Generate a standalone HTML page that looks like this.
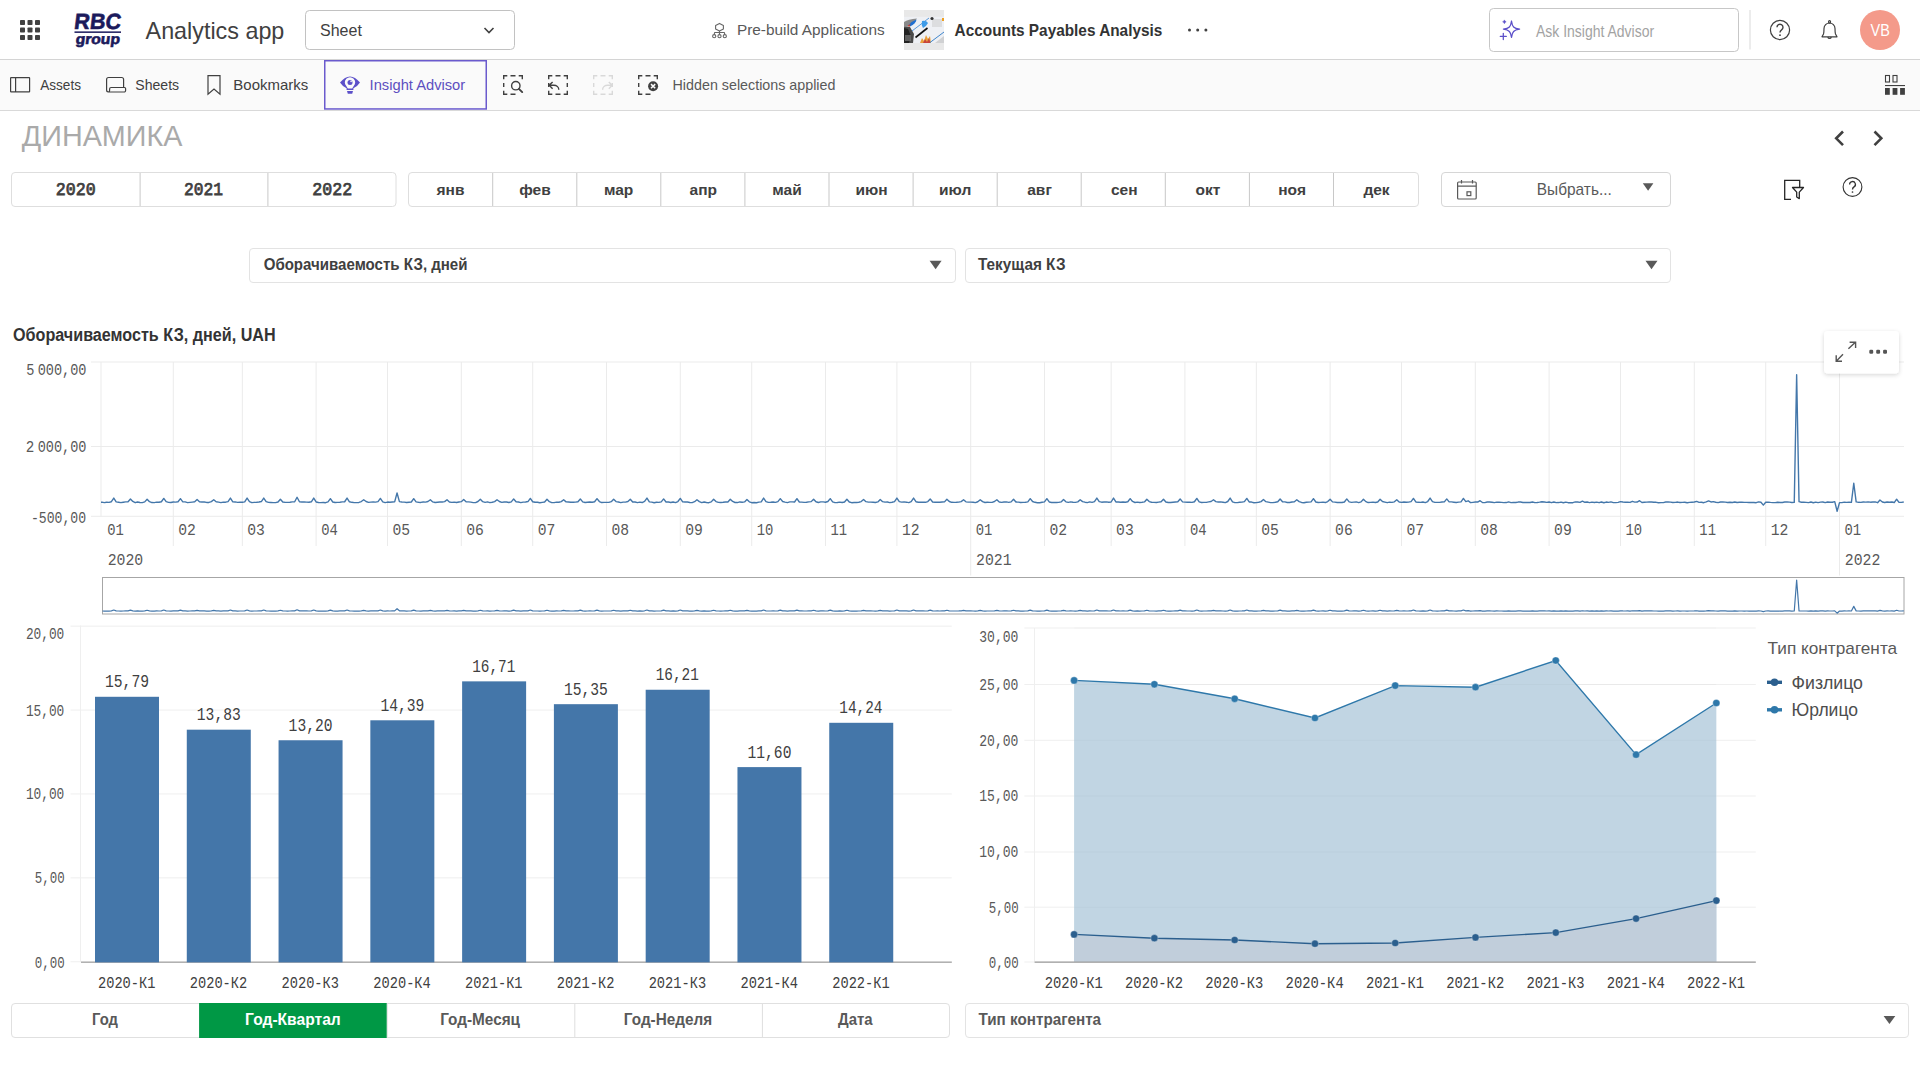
<!DOCTYPE html>
<html><head><meta charset='utf-8'><title>Analytics app</title>
<style>html,body{margin:0;padding:0;background:#fff;overflow:hidden;width:1920px;height:1080px}svg{display:block}text{font-kerning:normal}</style>
</head><body><svg width='1920' height='1080' viewBox='0 0 1920 1080'>
<rect x='0' y='0' width='1920' height='59' fill='#ffffff'/>
<rect x='0' y='59' width='1920' height='1' fill='#d4d4d4'/>
<rect x='0' y='60' width='1920' height='50' fill='#fafafa'/>
<rect x='0' y='110' width='1920' height='1' fill='#d9d9d9'/>
<rect x='20.0' y='20.0' width='5' height='5' rx='0.8' fill='#404040'/>
<rect x='20.0' y='27.5' width='5' height='5' rx='0.8' fill='#404040'/>
<rect x='20.0' y='35.0' width='5' height='5' rx='0.8' fill='#404040'/>
<rect x='27.5' y='20.0' width='5' height='5' rx='0.8' fill='#404040'/>
<rect x='27.5' y='27.5' width='5' height='5' rx='0.8' fill='#404040'/>
<rect x='27.5' y='35.0' width='5' height='5' rx='0.8' fill='#404040'/>
<rect x='35.0' y='20.0' width='5' height='5' rx='0.8' fill='#404040'/>
<rect x='35.0' y='27.5' width='5' height='5' rx='0.8' fill='#404040'/>
<rect x='35.0' y='35.0' width='5' height='5' rx='0.8' fill='#404040'/>
<text x='73.62' y='28.80' font-family='Liberation Sans' font-weight='700' font-size='22' fill='#1b1a5c' textLength='46.64' lengthAdjust='spacingAndGlyphs' transform='translate(0,28.8) skewX(-7) translate(0,-28.8)' stroke='#1b1a5c' stroke-width='0.6' xml:space='preserve'>RBC</text>
<rect x='74.5' y='31.4' width='46.5' height='1.5' fill='#1b1a5c'/>
<text x='75.20' y='43.60' font-family='Liberation Sans' font-weight='700' font-size='14.5' fill='#1b1a5c' textLength='44.28' lengthAdjust='spacingAndGlyphs' transform='translate(0,43.6) skewX(-7) translate(0,-43.6)' stroke='#1b1a5c' stroke-width='0.6' xml:space='preserve'>group</text>
<text x='145.60' y='39.00' font-family='Liberation Sans' font-weight='400' font-size='24' fill='#404040' textLength='138.73' lengthAdjust='spacingAndGlyphs' xml:space='preserve'>Analytics app</text>
<rect x='305.5' y='10.5' width='209' height='39' rx='4' fill='#fff' stroke='#c2c2c2' stroke-width='1'/>
<text x='320.06' y='36.10' font-family='Liberation Sans' font-weight='400' font-size='17' fill='#404040' textLength='41.81' lengthAdjust='spacingAndGlyphs' xml:space='preserve'>Sheet</text>
<polyline points='484.5,28 489,32.5 493.5,28' fill='none' stroke='#404040' stroke-width='1.6'/>
<g fill='none' stroke='#666' stroke-width='1.1' stroke-linejoin='round'><path d='M719.5,23.4 L723.4,25.4 V29 L719.5,31 L715.6,29 V25.4 z'/><path d='M719.5,31 V34.4 M714.2,34.6 L714.6,32.5 H724.4 L724.8,34.6'/><circle cx='714.2' cy='36.2' r='1.6'/><circle cx='719.5' cy='36.2' r='1.6'/><circle cx='724.8' cy='36.2' r='1.6'/></g>
<text x='736.94' y='35.00' font-family='Liberation Sans' font-weight='400' font-size='14.5' fill='#595959' textLength='147.74' lengthAdjust='spacingAndGlyphs' xml:space='preserve'>Pre-build Applications</text>
<rect x='904' y='10' width='40' height='40' fill='#e8e8e8'/>
<g><rect x='904' y='16.8' width='40' height='26.2' fill='#eef0f4'/><path d='M904,26 L910,27 L914,34 L913,43 H904 z' fill='#4a4a4a'/><path d='M904,28 L908,29 L911,36 L909,43 H904 z' fill='#222'/><path d='M905,35 h6 v6 h-6 z' fill='#777' fill-opacity='0.7'/><path d='M904,22 Q908,19 917,18.5 Q914,23 909,26 L904,27 z' fill='#8a8a8a'/><path d='M908,25.5 Q912,21 916.5,19.5 Q916,23.5 910,26.5 z' fill='#1f6fd0'/><path d='M907.5,26 Q909,24.5 910.5,24 L909.5,26.8 z' fill='#d8402a'/><path d='M912,31 L929,18' stroke='#4a8fd6' stroke-width='0.9' fill='none'/><path d='M922,21 Q926,20 928,23 Q926,27 923,28 Q921,25 922,21 z' fill='#3d9be8'/><path d='M915.5,37.5 L927.5,28' stroke='#111' stroke-width='1.6' fill='none'/><path d='M920,43 L922,38 L924,41 L926,35 L928,39 L930,36 L931,43 z' fill='#e9a03a'/><path d='M923,43 L925,39 L927,42 L929,38 L930.5,43 z' fill='#c8453a'/><path d='M930,42.5 L944,32' stroke='#3f86cc' stroke-width='1' fill='none'/><path d='M932,19 h10 v8 h-10 z' fill='#c9c9c9' fill-opacity='0.5'/><circle cx='932' cy='18.5' r='1.6' fill='#333'/><path d='M942,18 h2 v3 h-2 z' fill='#f0a020'/><path d='M935,43 L944,36 V43 z' fill='#bdbdbd' fill-opacity='0.6'/></g>
<text x='954.60' y='35.70' font-family='Liberation Sans' font-weight='700' font-size='17' fill='#333333' textLength='207.73' lengthAdjust='spacingAndGlyphs' xml:space='preserve'>Accounts Payables Analysis</text>
<circle cx='1189.5' cy='30' r='1.5' fill='#404040'/>
<circle cx='1197.7' cy='30' r='1.5' fill='#404040'/>
<circle cx='1205.9' cy='30' r='1.5' fill='#404040'/>
<rect x='1489.5' y='8.5' width='249' height='43' rx='4' fill='#fff' stroke='#c7c7c7' stroke-width='1'/>
<g fill='none' stroke='#5b4fc9' stroke-width='1.25' stroke-linejoin='round' stroke-linecap='round'><path d='M1511.5,21 C1512.3,26.8 1513.6,28.4 1519.6,29.2 C1513.6,30 1512.3,31.7 1511.5,37.4 C1510.7,31.7 1509.4,30 1503.4,29.2 C1509.4,28.4 1510.7,26.8 1511.5,21 z'/><path d='M1500.3,36.4 h6 M1503.3,33.3 v6.2'/></g><path d='M1504.4,19.9 Q1504.7,21.5 1506.2,21.8 Q1504.7,22.1 1504.4,23.7 Q1504.1,22.1 1502.6,21.8 Q1504.1,21.5 1504.4,19.9 z' fill='#5b4fc9' stroke='#5b4fc9' stroke-width='0.5'/>
<text x='1536.00' y='36.70' font-family='Liberation Sans' font-weight='400' font-size='16' fill='#a3a3a3' textLength='118.15' lengthAdjust='spacingAndGlyphs' xml:space='preserve'>Ask Insight Advisor</text>
<rect x='1749.5' y='10' width='1' height='39.5' fill='#d9d9d9'/>
<circle cx='1780' cy='30' r='9.6' fill='none' stroke='#404040' stroke-width='1.2'/>
<path d='M1777,27.3 a3,3 0 1 1 4.6,2.5 c-1.2,0.8 -1.6,1.2 -1.6,2.7' fill='none' stroke='#404040' stroke-width='1.4'/><circle cx='1780' cy='35.2' r='0.9' fill='#404040'/>
<g fill='none' stroke='#404040' stroke-width='1.2' stroke-linejoin='round'><path d='M1822,36.8 H1837 L1835.5,34 Q1835,32 1835,28.5 A5.5,5.5 0 0 0 1824,28.5 Q1824,32 1823.5,34 Z'/><path d='M1827.8,37 A1.8,1.8 0 0 0 1831.3,37'/><rect x='1828.6' y='20.6' width='1.9' height='2.6' rx='0.9'/></g>
<circle cx='1880' cy='30' r='20' fill='#f49a8a'/>
<text x='1870.50' y='35.50' font-family='Liberation Sans' font-weight='400' font-size='16' fill='#ffffff' textLength='19.31' lengthAdjust='spacingAndGlyphs' xml:space='preserve'>VB</text>
<g fill='none' stroke='#404040' stroke-width='1.2'><rect x='10.6' y='77.6' width='19' height='14.3' rx='0.5'/><path d='M15.6,77.6 v14.3'/><path d='M106.6,90 v-10.5 a2,2 0 0 1 2,-2 h13 a2,2 0 0 1 2,2 v7.5 M106.6,90 a2,2 0 0 0 2,2 h15.5 a1.5,1.5 0 0 0 1.5,-1.5 v-2 a1,1 0 0 0 -1,-1 h-13.5 a1.5,1.5 0 0 0 -1.5,1.5 v1.5 a1.5,1.5 0 0 1 -3,0'/><path d='M208,75.6 h12 v18.5 l-6,-5 l-6,5 z' stroke-linejoin='miter'/></g>
<text x='40.20' y='89.50' font-family='Liberation Sans' font-weight='400' font-size='14.5' fill='#404040' textLength='40.78' lengthAdjust='spacingAndGlyphs' xml:space='preserve'>Assets</text>
<text x='135.33' y='90.00' font-family='Liberation Sans' font-weight='400' font-size='14.5' fill='#404040' textLength='43.82' lengthAdjust='spacingAndGlyphs' xml:space='preserve'>Sheets</text>
<text x='233.37' y='90.00' font-family='Liberation Sans' font-weight='400' font-size='14.5' fill='#404040' textLength='74.88' lengthAdjust='spacingAndGlyphs' xml:space='preserve'>Bookmarks</text>
<rect x='324.75' y='60.75' width='161.5' height='48.2' fill='#fafafa' stroke='#6a5acd' stroke-width='1.5'/>
<path d='M340,82.5 Q350,70.5 360,82.5 Q357,87 353.4,88.3 V89.9 H346.6 V88.3 Q343,87 340,82.5 z' fill='#5b4fc9'/><path d='M346.3,86 A5.2,5.2 0 1 1 353.7,86 L352.2,88.5 H347.8 z' fill='#fafafa'/><circle cx='350' cy='82.4' r='2.5' fill='#5b4fc9'/><circle cx='351.1' cy='81.4' r='0.8' fill='#fafafa'/><path d='M347,91 H353 L352.2,93.8 H347.8 z' fill='#5b4fc9'/>
<text x='369.59' y='89.75' font-family='Liberation Sans' font-weight='400' font-size='14.5' fill='#5d4fc0' textLength='95.62' lengthAdjust='spacingAndGlyphs' xml:space='preserve'>Insight Advisor</text>
<path d='M503.7,79.3 V75.7 H507.3 M518.6999999999999,75.7 H522.3 V79.3 M503.7,90.7 V94.3 H507.3 M510.5,75.7 H515.5 M510.5,94.3 H515.5 M503.7,83 V87' fill='none' stroke='#404040' stroke-width='1.4'/>
<circle cx='515.8' cy='85.7' r='4.2' fill='none' stroke='#404040' stroke-width='1.4'/><path d='M518.9,88.8 l3.3,3.3' stroke='#404040' stroke-width='1.9' stroke-linecap='round'/>
<path d='M548.7,79.3 V75.7 H552.3000000000001 M563.6999999999999,75.7 H567.3 V79.3 M548.7,90.7 V94.3 H552.3000000000001 M563.6999999999999,94.3 H567.3 V90.7 M555.5,75.7 H560.5 M555.5,94.3 H560.5 M548.7,83 V87 M567.3,83 V87' fill='none' stroke='#404040' stroke-width='1.4'/>
<path d='M549.2,85.3 H553.8 A5,4.4 0 0 1 558.8,89.7 M552.6,81.9 L549.2,85.3 L552.6,88.7' fill='none' stroke='#404040' stroke-width='1.4' stroke-linejoin='round'/>
<path d='M593.7,79.3 V75.7 H597.3000000000001 M608.6999999999999,75.7 H612.3 V79.3 M593.7,90.7 V94.3 H597.3000000000001 M608.6999999999999,94.3 H612.3 V90.7 M600.5,75.7 H605.5 M600.5,94.3 H605.5 M593.7,83 V87 M612.3,83 V87' fill='none' stroke='#d9d9d9' stroke-width='1.4'/>
<path d='M612.2,85.3 H607.6 A5,4.4 0 0 0 602.6,89.7 M608.8,81.9 L612.2,85.3 L608.8,88.7' fill='none' stroke='#d9d9d9' stroke-width='1.4' stroke-linejoin='round'/>
<path d='M638.7,79.3 V75.7 H642.3000000000001 M653.6999999999999,75.7 H657.3 V79.3 M638.7,90.7 V94.3 H642.3000000000001 M645.5,75.7 H650.5 M645.5,94.3 H650.5 M638.7,83 V87' fill='none' stroke='#404040' stroke-width='1.4'/>
<circle cx='653.1' cy='86.2' r='5' fill='#404040'/><path d='M651,84.1 l4.2,4.2 M655.2,84.1 l-4.2,4.2' stroke='#fafafa' stroke-width='1.5'/>
<text x='672.55' y='89.70' font-family='Liberation Sans' font-weight='400' font-size='15' fill='#595959' textLength='162.86' lengthAdjust='spacingAndGlyphs' xml:space='preserve'>Hidden selections applied</text>
<g fill='#404040'><rect x='1885.5' y='75.5' width='4' height='6.5' fill='none' stroke='#404040' stroke-width='1.1'/><rect x='1893' y='75.5' width='4' height='6.5' fill='none' stroke='#404040' stroke-width='1.1'/><rect x='1885' y='85' width='20' height='1.1'/><rect x='1885' y='88' width='4.8' height='6.8'/><rect x='1892.6' y='88' width='4.8' height='6.8'/><rect x='1900.1' y='88' width='4.8' height='6.8'/></g>
<text x='21.80' y='146.10' font-family='Liberation Sans' font-weight='400' font-size='30' fill='#aaaaaa' textLength='160.61' lengthAdjust='spacingAndGlyphs' xml:space='preserve'>ДИНАМИКА</text>
<path d='M1843,131.5 l-6.8,6.8 l6.8,6.8 M1874.5,131.5 l6.8,6.8 l-6.8,6.8' fill='none' stroke='#404040' stroke-width='2.6'/>
<rect x='11.5' y='172.5' width='384.5' height='34' rx='3.5' fill='#fff' stroke='#dedede' stroke-width='1'/>
<rect x='139.6' y='173' width='1' height='33' fill='#c8c8c8'/>
<rect x='267.4' y='173' width='1' height='33' fill='#c8c8c8'/>
<text x='55.85' y='195.00' font-family='Liberation Mono' font-weight='400' font-size='17.5' fill='#404040' textLength='39.91' lengthAdjust='spacingAndGlyphs' stroke='#404040' stroke-width='0.75' xml:space='preserve'>2020</text>
<text x='184.07' y='195.00' font-family='Liberation Mono' font-weight='400' font-size='17.5' fill='#404040' textLength='38.94' lengthAdjust='spacingAndGlyphs' stroke='#404040' stroke-width='0.75' xml:space='preserve'>2021</text>
<text x='312.25' y='195.00' font-family='Liberation Mono' font-weight='400' font-size='17.5' fill='#404040' textLength='39.91' lengthAdjust='spacingAndGlyphs' stroke='#404040' stroke-width='0.75' xml:space='preserve'>2022</text>
<rect x='408.5' y='172.5' width='1010' height='34' rx='3.5' fill='#fff' stroke='#dedede' stroke-width='1'/>
<rect x='492.2' y='173' width='1' height='33' fill='#c8c8c8'/>
<rect x='576.3' y='173' width='1' height='33' fill='#c8c8c8'/>
<rect x='660.3' y='173' width='1' height='33' fill='#c8c8c8'/>
<rect x='744.4' y='173' width='1' height='33' fill='#c8c8c8'/>
<rect x='828.5' y='173' width='1' height='33' fill='#c8c8c8'/>
<rect x='912.6' y='173' width='1' height='33' fill='#c8c8c8'/>
<rect x='996.7' y='173' width='1' height='33' fill='#c8c8c8'/>
<rect x='1080.7' y='173' width='1' height='33' fill='#c8c8c8'/>
<rect x='1164.8' y='173' width='1' height='33' fill='#c8c8c8'/>
<rect x='1248.9' y='173' width='1' height='33' fill='#c8c8c8'/>
<rect x='1333.0' y='173' width='1' height='33' fill='#c8c8c8'/>
<text x='436.58' y='195.00' font-family='Liberation Sans' font-weight='700' font-size='15.5' fill='#404040' xml:space='preserve'>янв</text>
<text x='519.25' y='195.00' font-family='Liberation Sans' font-weight='700' font-size='15.5' fill='#404040' xml:space='preserve'>фев</text>
<text x='603.92' y='195.00' font-family='Liberation Sans' font-weight='700' font-size='15.5' fill='#404040' xml:space='preserve'>мар</text>
<text x='689.58' y='195.00' font-family='Liberation Sans' font-weight='700' font-size='15.5' fill='#404040' xml:space='preserve'>апр</text>
<text x='772.25' y='195.00' font-family='Liberation Sans' font-weight='700' font-size='15.5' fill='#404040' xml:space='preserve'>май</text>
<text x='855.42' y='195.00' font-family='Liberation Sans' font-weight='700' font-size='15.5' fill='#404040' xml:space='preserve'>июн</text>
<text x='939.08' y='195.00' font-family='Liberation Sans' font-weight='700' font-size='15.5' fill='#404040' xml:space='preserve'>июл</text>
<text x='1027.25' y='195.00' font-family='Liberation Sans' font-weight='700' font-size='15.5' fill='#404040' xml:space='preserve'>авг</text>
<text x='1110.92' y='195.00' font-family='Liberation Sans' font-weight='700' font-size='15.5' fill='#404040' xml:space='preserve'>сен</text>
<text x='1195.58' y='195.00' font-family='Liberation Sans' font-weight='700' font-size='15.5' fill='#404040' xml:space='preserve'>окт</text>
<text x='1278.25' y='195.00' font-family='Liberation Sans' font-weight='700' font-size='15.5' fill='#404040' xml:space='preserve'>ноя</text>
<text x='1363.42' y='195.00' font-family='Liberation Sans' font-weight='700' font-size='15.5' fill='#404040' xml:space='preserve'>дек</text>
<rect x='1441.5' y='172.5' width='229' height='34' rx='3.5' fill='#fff' stroke='#d6d6d6' stroke-width='1'/>
<g fill='none' stroke='#595959' stroke-width='1.2'><rect x='1457.6' y='182' width='18.6' height='17' rx='1'/><path d='M1457.6,186.2 h18.6 M1461.5,180 v3.5 M1472.5,180 v3.5'/><rect x='1467' y='191.8' width='3.8' height='3.8'/></g>
<text x='1536.79' y='195.20' font-family='Liberation Sans' font-weight='400' font-size='17' fill='#595959' textLength='75.10' lengthAdjust='spacingAndGlyphs' xml:space='preserve'>Выбрать...</text>
<path d='M1642.8,183.3 h10.6 l-5.3,7.5 z' fill='#595959'/>
<g fill='none' stroke='#262626' stroke-width='1.3'><path d='M1791,199.3 h-6.3 v-19 h15 v7'/><path d='M1792.5,187.5 h11 l-4.2,4.6 v6.5 l-2.6,-1.6 v-4.9 z' stroke-linejoin='round'/></g>
<circle cx='1852.5' cy='187' r='9.4' fill='none' stroke='#333' stroke-width='1.1'/>
<path d='M1849.6,184.5 a2.9,2.9 0 1 1 4.4,2.4 c-1.1,0.7 -1.5,1.1 -1.5,2.6' fill='none' stroke='#333' stroke-width='1.3'/><circle cx='1852.5' cy='192' r='0.85' fill='#333'/>
<rect x='249.5' y='248.5' width='706' height='34' rx='3.5' fill='#fff' stroke='#e3e3e3' stroke-width='1'/>
<text x='263.70' y='269.50' font-family='Liberation Sans' font-weight='700' font-size='16' fill='#404040' textLength='203.81' lengthAdjust='spacingAndGlyphs' xml:space='preserve'>Оборачиваемость КЗ, дней</text>
<path d='M929.6,260.8 h12 l-6,8.4 z' fill='#595959'/>
<rect x='965.5' y='248.5' width='705' height='34' rx='3.5' fill='#fff' stroke='#e3e3e3' stroke-width='1'/>
<text x='978.00' y='269.50' font-family='Liberation Sans' font-weight='700' font-size='16' fill='#404040' textLength='87.62' lengthAdjust='spacingAndGlyphs' xml:space='preserve'>Текущая КЗ</text>
<path d='M1645.5,260.8 h12 l-6,8.4 z' fill='#595959'/>
<text x='13.00' y='340.90' font-family='Liberation Sans' font-weight='700' font-size='17.5' fill='#333333' textLength='262.65' lengthAdjust='spacingAndGlyphs' xml:space='preserve'>Оборачиваемость КЗ, дней, UAH</text>
<rect x='91' y='361.5' width='1813' height='1' fill='#ebebeb'/>
<rect x='91' y='446.0' width='1813' height='1' fill='#ebebeb'/>
<rect x='91' y='515.8' width='1813' height='1' fill='#ebebeb'/>
<rect x='100.50' y='362' width='1' height='154.3' fill='#ebebeb'/>
<text x='107.23' y='534.80' font-family='Liberation Mono' font-weight='400' font-size='16' fill='#595959' textLength='16.64' lengthAdjust='spacingAndGlyphs' xml:space='preserve'>01</text>
<text x='107.68' y='565.00' font-family='Liberation Mono' font-weight='400' font-size='16' fill='#595959' textLength='35.50' lengthAdjust='spacingAndGlyphs' xml:space='preserve'>2020</text>
<rect x='172.79' y='362' width='1' height='184.0' fill='#ebebeb'/>
<text x='178.27' y='534.80' font-family='Liberation Mono' font-weight='400' font-size='16' fill='#595959' textLength='17.62' lengthAdjust='spacingAndGlyphs' xml:space='preserve'>02</text>
<rect x='241.82' y='362' width='1' height='184.0' fill='#ebebeb'/>
<text x='247.30' y='534.80' font-family='Liberation Mono' font-weight='400' font-size='16' fill='#595959' textLength='17.62' lengthAdjust='spacingAndGlyphs' xml:space='preserve'>03</text>
<rect x='315.61' y='362' width='1' height='184.0' fill='#ebebeb'/>
<text x='321.14' y='534.80' font-family='Liberation Mono' font-weight='400' font-size='16' fill='#595959' textLength='16.64' lengthAdjust='spacingAndGlyphs' xml:space='preserve'>04</text>
<rect x='387.02' y='362' width='1' height='184.0' fill='#ebebeb'/>
<text x='392.50' y='534.80' font-family='Liberation Mono' font-weight='400' font-size='16' fill='#595959' textLength='17.62' lengthAdjust='spacingAndGlyphs' xml:space='preserve'>05</text>
<rect x='460.81' y='362' width='1' height='184.0' fill='#ebebeb'/>
<text x='466.29' y='534.80' font-family='Liberation Mono' font-weight='400' font-size='16' fill='#595959' textLength='17.62' lengthAdjust='spacingAndGlyphs' xml:space='preserve'>06</text>
<rect x='532.21' y='362' width='1' height='184.0' fill='#ebebeb'/>
<text x='537.70' y='534.80' font-family='Liberation Mono' font-weight='400' font-size='16' fill='#595959' textLength='17.62' lengthAdjust='spacingAndGlyphs' xml:space='preserve'>07</text>
<rect x='606.00' y='362' width='1' height='184.0' fill='#ebebeb'/>
<text x='611.49' y='534.80' font-family='Liberation Mono' font-weight='400' font-size='16' fill='#595959' textLength='17.62' lengthAdjust='spacingAndGlyphs' xml:space='preserve'>08</text>
<rect x='679.79' y='362' width='1' height='184.0' fill='#ebebeb'/>
<text x='685.28' y='534.80' font-family='Liberation Mono' font-weight='400' font-size='16' fill='#595959' textLength='17.62' lengthAdjust='spacingAndGlyphs' xml:space='preserve'>09</text>
<rect x='751.20' y='362' width='1' height='184.0' fill='#ebebeb'/>
<text x='756.74' y='534.80' font-family='Liberation Mono' font-weight='400' font-size='16' fill='#595959' textLength='16.64' lengthAdjust='spacingAndGlyphs' xml:space='preserve'>10</text>
<rect x='824.99' y='362' width='1' height='184.0' fill='#ebebeb'/>
<text x='830.52' y='534.80' font-family='Liberation Mono' font-weight='400' font-size='16' fill='#595959' textLength='16.64' lengthAdjust='spacingAndGlyphs' xml:space='preserve'>11</text>
<rect x='896.40' y='362' width='1' height='184.0' fill='#ebebeb'/>
<text x='901.88' y='534.80' font-family='Liberation Mono' font-weight='400' font-size='16' fill='#595959' textLength='17.62' lengthAdjust='spacingAndGlyphs' xml:space='preserve'>12</text>
<rect x='970.19' y='362' width='1' height='213.5' fill='#ebebeb'/>
<text x='975.72' y='534.80' font-family='Liberation Mono' font-weight='400' font-size='16' fill='#595959' textLength='16.64' lengthAdjust='spacingAndGlyphs' xml:space='preserve'>01</text>
<text x='976.07' y='565.00' font-family='Liberation Mono' font-weight='400' font-size='16' fill='#595959' textLength='35.50' lengthAdjust='spacingAndGlyphs' xml:space='preserve'>2021</text>
<rect x='1043.98' y='362' width='1' height='184.0' fill='#ebebeb'/>
<text x='1049.46' y='534.80' font-family='Liberation Mono' font-weight='400' font-size='16' fill='#595959' textLength='17.62' lengthAdjust='spacingAndGlyphs' xml:space='preserve'>02</text>
<rect x='1110.63' y='362' width='1' height='184.0' fill='#ebebeb'/>
<text x='1116.11' y='534.80' font-family='Liberation Mono' font-weight='400' font-size='16' fill='#595959' textLength='17.62' lengthAdjust='spacingAndGlyphs' xml:space='preserve'>03</text>
<rect x='1184.42' y='362' width='1' height='184.0' fill='#ebebeb'/>
<text x='1189.95' y='534.80' font-family='Liberation Mono' font-weight='400' font-size='16' fill='#595959' textLength='16.64' lengthAdjust='spacingAndGlyphs' xml:space='preserve'>04</text>
<rect x='1255.83' y='362' width='1' height='184.0' fill='#ebebeb'/>
<text x='1261.31' y='534.80' font-family='Liberation Mono' font-weight='400' font-size='16' fill='#595959' textLength='17.62' lengthAdjust='spacingAndGlyphs' xml:space='preserve'>05</text>
<rect x='1329.62' y='362' width='1' height='184.0' fill='#ebebeb'/>
<text x='1335.10' y='534.80' font-family='Liberation Mono' font-weight='400' font-size='16' fill='#595959' textLength='17.62' lengthAdjust='spacingAndGlyphs' xml:space='preserve'>06</text>
<rect x='1401.02' y='362' width='1' height='184.0' fill='#ebebeb'/>
<text x='1406.51' y='534.80' font-family='Liberation Mono' font-weight='400' font-size='16' fill='#595959' textLength='17.62' lengthAdjust='spacingAndGlyphs' xml:space='preserve'>07</text>
<rect x='1474.81' y='362' width='1' height='184.0' fill='#ebebeb'/>
<text x='1480.30' y='534.80' font-family='Liberation Mono' font-weight='400' font-size='16' fill='#595959' textLength='17.62' lengthAdjust='spacingAndGlyphs' xml:space='preserve'>08</text>
<rect x='1548.60' y='362' width='1' height='184.0' fill='#ebebeb'/>
<text x='1554.09' y='534.80' font-family='Liberation Mono' font-weight='400' font-size='16' fill='#595959' textLength='17.62' lengthAdjust='spacingAndGlyphs' xml:space='preserve'>09</text>
<rect x='1620.01' y='362' width='1' height='184.0' fill='#ebebeb'/>
<text x='1625.55' y='534.80' font-family='Liberation Mono' font-weight='400' font-size='16' fill='#595959' textLength='16.64' lengthAdjust='spacingAndGlyphs' xml:space='preserve'>10</text>
<rect x='1693.80' y='362' width='1' height='184.0' fill='#ebebeb'/>
<text x='1699.33' y='534.80' font-family='Liberation Mono' font-weight='400' font-size='16' fill='#595959' textLength='16.64' lengthAdjust='spacingAndGlyphs' xml:space='preserve'>11</text>
<rect x='1765.21' y='362' width='1' height='184.0' fill='#ebebeb'/>
<text x='1770.69' y='534.80' font-family='Liberation Mono' font-weight='400' font-size='16' fill='#595959' textLength='17.62' lengthAdjust='spacingAndGlyphs' xml:space='preserve'>12</text>
<rect x='1839.00' y='362' width='1' height='213.5' fill='#ebebeb'/>
<text x='1844.53' y='534.80' font-family='Liberation Mono' font-weight='400' font-size='16' fill='#595959' textLength='16.64' lengthAdjust='spacingAndGlyphs' xml:space='preserve'>01</text>
<text x='1844.87' y='565.00' font-family='Liberation Mono' font-weight='400' font-size='16' fill='#595959' textLength='35.50' lengthAdjust='spacingAndGlyphs' xml:space='preserve'>2022</text>
<text x='26.15' y='375.00' font-family='Liberation Mono' font-weight='400' font-size='16' fill='#595959' textLength='8.17' lengthAdjust='spacingAndGlyphs' xml:space='preserve'>5</text>
<text x='37.65' y='375.00' font-family='Liberation Mono' font-weight='400' font-size='16' fill='#595959' textLength='48.76' lengthAdjust='spacingAndGlyphs' xml:space='preserve'>000,00</text>
<text x='25.81' y='452.00' font-family='Liberation Mono' font-weight='400' font-size='16' fill='#595959' textLength='8.53' lengthAdjust='spacingAndGlyphs' xml:space='preserve'>2</text>
<text x='37.65' y='452.00' font-family='Liberation Mono' font-weight='400' font-size='16' fill='#595959' textLength='48.76' lengthAdjust='spacingAndGlyphs' xml:space='preserve'>000,00</text>
<text x='30.96' y='523.00' font-family='Liberation Mono' font-weight='400' font-size='16' fill='#595959' textLength='55.12' lengthAdjust='spacingAndGlyphs' xml:space='preserve'>-500,00</text>
<polyline points='101,502.22 101.88,502.17 104.26,502.66 106.64,502.27 109.02,502.41 111.40,501.73 113.78,498.09 116.16,501.88 118.54,502.26 120.92,502.67 123.30,502.24 125.68,501.92 128.06,501.69 130.44,498.93 132.82,501.47 135.20,502.68 137.58,502.00 139.97,502.48 142.35,502.60 144.73,501.85 147.11,499.21 149.49,501.70 151.87,502.56 154.25,502.64 156.63,502.12 159.01,502.25 161.39,501.74 163.77,498.37 166.15,501.69 168.53,502.34 170.91,502.47 173.29,502.05 175.67,502.13 178.05,501.70 180.43,498.65 182.81,501.86 185.19,501.90 187.57,502.62 189.95,502.37 192.33,502.08 194.71,501.75 197.09,499.50 199.47,501.71 201.85,502.06 204.23,502.03 206.61,502.43 208.99,502.43 211.37,501.57 213.75,499.78 216.13,501.75 218.51,502.16 220.90,502.67 223.28,502.13 225.66,502.18 228.04,501.56 230.42,498.09 232.80,501.82 235.18,501.93 237.56,502.42 239.94,502.21 242.32,502.31 244.70,501.86 247.08,498.09 249.46,501.53 251.84,502.65 254.22,502.34 256.60,502.26 258.98,501.98 261.36,501.53 263.74,498.09 266.12,501.64 268.50,502.40 270.88,502.53 273.26,502.65 275.64,502.59 278.02,502.01 280.40,499.21 282.78,502.02 285.16,502.37 287.54,502.41 289.92,502.24 292.30,501.92 294.68,501.73 297.06,497.25 299.45,501.76 301.83,501.99 304.21,501.92 306.59,502.15 308.97,502.25 311.35,501.80 313.73,498.09 316.11,501.98 318.49,502.55 320.87,502.58 323.25,502.43 325.63,502.68 328.01,501.93 330.39,498.65 332.77,501.98 335.15,502.55 337.53,502.40 339.91,502.19 342.29,501.92 344.67,501.75 347.05,498.09 349.43,501.76 351.81,502.31 354.19,502.65 356.57,502.63 358.95,502.43 361.33,501.55 363.71,499.78 366.09,501.49 368.47,502.42 370.85,502.14 373.23,501.95 375.61,502.08 378.00,501.66 380.38,498.37 382.76,501.81 385.14,502.58 387.52,502.07 389.90,502.27 392.28,502.07 394.66,501.89 397.04,493.04 399.42,501.57 401.80,502.03 404.18,502.10 406.56,502.53 408.94,502.29 411.32,502.00 413.70,498.65 416.08,501.91 418.46,502.21 420.84,502.43 423.22,502.04 425.60,502.11 427.98,501.47 430.36,499.78 432.74,501.91 435.12,502.55 437.50,502.20 439.88,501.96 442.26,502.01 444.64,501.65 447.02,499.78 449.40,501.95 451.78,502.39 454.16,502.12 456.55,502.55 458.93,501.97 461.31,501.66 463.69,499.50 466.07,501.79 468.45,501.92 470.83,502.11 473.21,502.58 475.59,502.61 477.97,501.51 480.35,499.21 482.73,501.69 485.11,502.32 487.49,501.93 489.87,502.59 492.25,502.26 494.63,501.57 497.01,499.78 499.39,501.50 501.77,502.36 504.15,501.99 506.53,502.03 508.91,502.54 511.29,501.86 513.67,498.93 516.05,501.71 518.43,502.02 520.81,502.67 523.19,502.10 525.57,501.97 527.95,501.56 530.33,498.37 532.71,501.74 535.09,502.27 537.48,502.28 539.86,502.71 542.24,502.35 544.62,502.02 547.00,499.21 549.38,501.67 551.76,502.62 554.14,502.67 556.52,502.15 558.90,502.27 561.28,501.58 563.66,499.78 566.04,501.86 568.42,502.07 570.80,502.29 573.18,502.25 575.56,502.08 577.94,501.77 580.32,498.93 582.70,501.91 585.08,502.49 587.46,502.29 589.84,502.04 592.22,502.29 594.60,501.73 596.98,498.65 599.36,501.52 601.74,502.55 604.12,502.34 606.50,502.37 608.88,502.39 611.26,501.64 613.64,499.21 616.03,501.58 618.41,501.97 620.79,502.59 623.17,502.12 625.55,502.17 627.93,501.52 630.31,499.21 632.69,501.97 635.07,501.98 637.45,502.58 639.83,502.16 642.21,502.53 644.59,501.46 646.97,498.09 649.35,501.84 651.73,502.11 654.11,502.70 656.49,502.25 658.87,502.35 661.25,501.83 663.63,498.93 666.01,501.96 668.39,501.95 670.77,502.53 673.15,501.98 675.53,502.65 677.91,501.51 680.29,498.37 682.67,501.78 685.05,501.95 687.43,502.03 689.81,502.50 692.19,502.60 694.58,501.70 696.96,499.78 699.34,501.57 701.72,502.57 704.10,501.97 706.48,502.49 708.86,502.71 711.24,501.87 713.62,499.21 716.00,501.54 718.38,502.34 720.76,502.44 723.14,502.26 725.52,501.94 727.90,501.95 730.28,499.21 732.66,501.48 735.04,502.50 737.42,502.57 739.80,501.94 742.18,502.19 744.56,501.90 746.94,499.50 749.32,501.82 751.70,502.71 754.08,502.51 756.46,502.71 758.84,502.10 761.22,501.91 763.60,498.09 765.98,501.56 768.36,502.36 770.74,502.30 773.12,502.02 775.51,502.39 777.89,501.63 780.27,498.65 782.65,501.52 785.03,502.11 787.41,502.60 789.79,501.89 792.17,501.89 794.55,502.01 796.93,498.65 799.31,501.99 801.69,502.16 804.07,502.40 806.45,502.29 808.83,501.90 811.21,501.63 813.59,499.21 815.97,501.77 818.35,502.50 820.73,501.91 823.11,501.90 825.49,502.26 827.87,501.48 830.25,498.65 832.63,501.83 835.01,502.65 837.39,502.49 839.77,502.17 842.15,502.51 844.53,501.97 846.91,499.21 849.29,502.00 851.67,502.70 854.06,502.46 856.44,502.52 858.82,502.23 861.20,501.60 863.58,499.50 865.96,501.68 868.34,502.08 870.72,502.11 873.10,502.30 875.48,502.48 877.86,501.94 880.24,499.50 882.62,501.67 885.00,502.10 887.38,502.04 889.76,502.60 892.14,502.28 894.52,501.55 896.90,498.09 899.28,501.57 901.66,502.12 904.04,501.92 906.42,502.18 908.80,502.65 911.18,501.66 913.56,498.09 915.94,501.71 918.32,502.19 920.70,502.19 923.08,502.15 925.46,502.31 927.84,501.57 930.22,498.93 932.61,501.97 934.99,502.28 937.37,502.09 939.75,502.32 942.13,502.04 944.51,501.89 946.89,499.21 949.27,501.47 951.65,502.31 954.03,502.40 956.41,502.32 958.79,502.15 961.17,501.67 963.55,499.78 965.93,501.83 968.31,502.17 970.69,502.14 973.07,502.20 975.45,502.61 977.83,501.75 980.21,499.78 982.59,501.64 984.97,502.48 987.35,502.29 989.73,502.33 992.11,502.33 994.49,501.52 996.87,499.78 999.25,502.01 1001.63,502.33 1004.01,502.03 1006.39,501.91 1008.77,502.34 1011.15,501.90 1013.54,499.21 1015.92,501.97 1018.30,502.09 1020.68,502.50 1023.06,502.42 1025.44,502.21 1027.82,501.86 1030.20,498.65 1032.58,501.52 1034.96,502.31 1037.34,502.70 1039.72,502.72 1042.10,502.31 1044.48,501.85 1046.86,498.65 1049.24,501.95 1051.62,502.44 1054.00,502.45 1056.38,502.44 1058.76,502.39 1061.14,501.91 1063.52,499.50 1065.90,501.81 1068.28,502.39 1070.66,501.88 1073.04,502.22 1075.42,502.42 1077.80,501.87 1080.18,499.78 1082.56,501.65 1084.94,502.19 1087.32,502.60 1089.70,501.90 1092.09,502.35 1094.47,501.59 1096.85,498.09 1099.23,501.56 1101.61,502.19 1103.99,501.95 1106.37,501.93 1108.75,502.26 1111.13,501.99 1113.51,498.09 1115.89,501.94 1118.27,501.99 1120.65,502.31 1123.03,501.95 1125.41,502.26 1127.79,501.79 1130.17,498.65 1132.55,501.47 1134.93,502.50 1137.31,502.17 1139.69,502.47 1142.07,502.25 1144.45,501.93 1146.83,499.21 1149.21,501.56 1151.59,502.26 1153.97,502.34 1156.35,502.44 1158.73,502.08 1161.11,501.71 1163.49,499.21 1165.87,501.97 1168.25,502.52 1170.63,502.50 1173.02,502.24 1175.40,501.97 1177.78,501.79 1180.16,498.93 1182.54,501.87 1184.92,502.09 1187.30,502.30 1189.68,502.24 1192.06,502.42 1194.44,501.72 1196.82,498.37 1199.20,501.87 1201.58,502.51 1203.96,502.38 1206.34,502.35 1208.72,501.92 1211.10,501.53 1213.48,499.78 1215.86,501.59 1218.24,502.04 1220.62,501.91 1223.00,502.31 1225.38,502.66 1227.76,501.50 1230.14,498.09 1232.52,501.88 1234.90,502.63 1237.28,502.59 1239.66,502.28 1242.04,502.15 1244.42,501.61 1246.80,498.37 1249.18,501.97 1251.57,502.07 1253.95,502.72 1256.33,502.62 1258.71,502.24 1261.09,501.62 1263.47,499.50 1265.85,501.66 1268.23,502.13 1270.61,502.63 1272.99,502.66 1275.37,502.28 1277.75,501.80 1280.13,498.93 1282.51,501.72 1284.89,501.88 1287.27,502.49 1289.65,502.45 1292.03,502.01 1294.41,501.72 1296.79,499.78 1299.17,501.62 1301.55,502.46 1303.93,502.70 1306.31,502.30 1308.69,502.15 1311.07,501.88 1313.45,498.65 1315.83,502.00 1318.21,502.44 1320.59,502.37 1322.97,502.15 1325.35,502.55 1327.73,501.60 1330.12,499.21 1332.50,501.91 1334.88,502.08 1337.26,502.56 1339.64,502.33 1342.02,502.50 1344.40,501.96 1346.78,498.93 1349.16,501.89 1351.54,502.37 1353.92,502.16 1356.30,501.92 1358.68,502.60 1361.06,501.90 1363.44,499.21 1365.82,501.62 1368.20,502.57 1370.58,502.34 1372.96,502.12 1375.34,502.46 1377.72,501.97 1380.10,499.21 1382.48,501.49 1384.86,502.09 1387.24,502.69 1389.62,502.16 1392.00,502.40 1394.38,501.83 1396.76,499.78 1399.14,501.97 1401.52,502.37 1403.90,501.98 1406.28,502.25 1408.66,502.08 1411.05,501.59 1413.43,498.37 1415.81,501.99 1418.19,502.32 1420.57,502.41 1422.95,501.95 1425.33,502.56 1427.71,501.52 1430.09,498.09 1432.47,501.67 1434.85,502.38 1437.23,502.40 1439.61,502.33 1441.99,502.04 1444.37,501.91 1446.75,498.93 1449.13,501.87 1451.51,501.91 1453.89,502.20 1456.27,502.50 1458.65,502.12 1461.03,501.86 1463.41,498.37 1465.79,501.57 1468.17,500.81 1470.55,502.63 1472.93,502.33 1475.31,502.06 1477.69,502.04 1480.07,500.69 1482.45,502.47 1484.83,502.59 1487.21,502.00 1489.60,502.06 1491.98,502.29 1494.36,502.59 1496.74,502.17 1499.12,502.26 1501.50,502.36 1503.88,502.66 1506.26,502.55 1508.64,501.89 1511.02,502.58 1513.40,502.33 1515.78,502.52 1518.16,502.07 1520.54,502.06 1522.92,502.49 1525.30,502.51 1527.68,502.35 1530.06,502.52 1532.44,501.96 1534.82,502.67 1537.20,502.51 1539.58,502.17 1541.96,501.73 1544.34,501.98 1546.72,502.34 1549.10,501.98 1551.48,502.68 1553.86,502.02 1556.24,502.66 1558.62,502.57 1561.00,502.07 1563.38,502.72 1565.76,502.12 1568.15,502.69 1570.53,502.68 1572.91,502.69 1575.29,501.95 1577.67,502.03 1580.05,502.41 1582.43,501.18 1584.81,502.31 1587.19,502.05 1589.57,502.59 1591.95,502.17 1594.33,502.49 1596.71,502.16 1599.09,502.68 1601.47,501.98 1603.85,502.71 1606.23,502.05 1608.61,502.39 1610.99,501.93 1613.37,502.59 1615.75,502.64 1618.13,502.41 1620.51,501.58 1622.89,502.04 1625.27,502.24 1627.65,502.10 1630.03,502.43 1632.41,501.31 1634.79,502.09 1637.17,502.04 1639.55,500.71 1641.93,502.46 1644.31,502.19 1646.70,502.12 1649.08,501.97 1651.46,502.00 1653.84,502.20 1656.22,502.32 1658.60,502.69 1660.98,502.59 1663.36,502.59 1665.74,502.03 1668.12,501.98 1670.50,502.16 1672.88,502.45 1675.26,502.34 1677.64,502.07 1680.02,502.46 1682.40,502.39 1684.78,502.30 1687.16,502.72 1689.54,502.33 1691.92,502.20 1694.30,502.02 1696.68,501.34 1699.06,502.41 1701.44,502.30 1703.82,502.69 1706.20,501.94 1708.58,500.90 1710.96,501.97 1713.34,501.66 1715.72,502.20 1718.10,502.63 1720.48,501.98 1722.86,502.04 1725.24,502.14 1727.63,502.53 1730.01,502.21 1732.39,502.45 1734.77,501.96 1737.15,502.51 1739.53,502.32 1741.91,502.20 1744.29,502.41 1746.67,502.38 1749.05,502.49 1751.43,502.40 1753.81,502.50 1756.19,502.68 1758.57,501.91 1760.95,502.28 1763.33,505.11 1765.71,502.27 1768.09,502.10 1770.47,502.40 1772.85,502.60 1775.23,502.65 1777.61,502.20 1779.99,502.47 1782.37,502.46 1784.75,501.99 1787.13,501.97 1789.51,502.09 1791.89,502.48 1794.27,502.37 1796.65,374.81 1799.03,501.68 1801.41,502.24 1803.79,502.28 1806.18,502.37 1808.56,502.61 1810.94,502.02 1813.32,502.71 1815.70,502.13 1818.08,502.67 1820.46,502.16 1822.84,502.04 1825.22,502.67 1827.60,501.97 1829.98,502.23 1832.36,502.29 1834.74,501.67 1837.12,511.28 1839.50,502.59 1841.88,502.63 1844.26,502.17 1846.64,502.37 1849.02,502.18 1851.40,502.37 1853.78,483.23 1856.16,501.88 1858.54,502.32 1860.92,502.41 1863.30,501.95 1865.68,502.17 1868.06,501.88 1870.44,502.18 1872.82,501.97 1875.20,501.93 1877.58,502.68 1879.96,500.06 1882.34,501.95 1884.73,502.47 1887.11,501.97 1889.49,502.29 1891.87,501.96 1894.25,502.55 1896.63,499.21 1899.01,502.39 1901.39,502.40 1903.77,501.95' fill='none' stroke='#4477aa' stroke-width='1.4' stroke-linejoin='round'/>
<rect x='102.5' y='577.5' width='1801.5' height='36.5' fill='#fff' stroke='#a6a6a6' stroke-width='1'/>
<polyline points='102.5,610.98 104.26,611.09 106.64,610.99 109.02,611.03 111.40,610.86 113.78,609.98 116.16,610.90 118.54,610.99 120.92,611.09 123.30,610.99 125.68,610.91 128.06,610.85 130.44,610.18 132.82,610.80 135.20,611.09 137.58,610.93 139.97,611.04 142.35,611.07 144.73,610.89 147.11,610.25 149.49,610.85 151.87,611.06 154.25,611.08 156.63,610.96 159.01,610.99 161.39,610.86 163.77,610.05 166.15,610.85 168.53,611.01 170.91,611.04 173.29,610.94 175.67,610.96 178.05,610.85 180.43,610.11 182.81,610.89 185.19,610.90 187.57,611.08 189.95,611.02 192.33,610.95 194.71,610.87 197.09,610.32 199.47,610.86 201.85,610.94 204.23,610.93 206.61,611.03 208.99,611.03 211.37,610.82 213.75,610.39 216.13,610.87 218.51,610.97 220.90,611.09 223.28,610.96 225.66,610.97 228.04,610.82 230.42,609.98 232.80,610.88 235.18,610.91 237.56,611.03 239.94,610.98 242.32,611.00 244.70,610.89 247.08,609.98 249.46,610.81 251.84,611.09 254.22,611.01 256.60,610.99 258.98,610.92 261.36,610.81 263.74,609.98 266.12,610.84 268.50,611.02 270.88,611.06 273.26,611.09 275.64,611.07 278.02,610.93 280.40,610.25 282.78,610.93 285.16,611.02 287.54,611.03 289.92,610.99 292.30,610.91 294.68,610.86 297.06,609.77 299.45,610.87 301.83,610.92 304.21,610.91 306.59,610.96 308.97,610.99 311.35,610.88 313.73,609.98 316.11,610.92 318.49,611.06 320.87,611.07 323.25,611.03 325.63,611.09 328.01,610.91 330.39,610.11 332.77,610.92 335.15,611.06 337.53,611.03 339.91,610.97 342.29,610.91 344.67,610.87 347.05,609.98 349.43,610.87 351.81,611.00 354.19,611.08 356.57,611.08 358.95,611.03 361.33,610.82 363.71,610.39 366.09,610.80 368.47,611.03 370.85,610.96 373.23,610.92 375.61,610.95 378.00,610.84 380.38,610.05 382.76,610.88 385.14,611.07 387.52,610.94 389.90,610.99 392.28,610.94 394.66,610.90 397.04,608.75 399.42,610.82 401.80,610.93 404.18,610.95 406.56,611.06 408.94,611.00 411.32,610.93 413.70,610.11 416.08,610.91 418.46,610.98 420.84,611.03 423.22,610.94 425.60,610.95 427.98,610.80 430.36,610.39 432.74,610.90 435.12,611.06 437.50,610.97 439.88,610.92 442.26,610.93 444.64,610.84 447.02,610.39 449.40,610.92 451.78,611.02 454.16,610.96 456.55,611.06 458.93,610.92 461.31,610.85 463.69,610.32 466.07,610.88 468.45,610.91 470.83,610.95 473.21,611.07 475.59,611.08 477.97,610.81 480.35,610.25 482.73,610.85 485.11,611.01 487.49,610.91 489.87,611.07 492.25,610.99 494.63,610.82 497.01,610.39 499.39,610.80 501.77,611.01 504.15,610.92 506.53,610.93 508.91,611.06 511.29,610.89 513.67,610.18 516.05,610.86 518.43,610.93 520.81,611.09 523.19,610.95 525.57,610.92 527.95,610.82 530.33,610.05 532.71,610.86 535.09,610.99 537.48,611.00 539.86,611.10 542.24,611.01 544.62,610.93 547.00,610.25 549.38,610.85 551.76,611.08 554.14,611.09 556.52,610.96 558.90,610.99 561.28,610.83 563.66,610.39 566.04,610.89 568.42,610.94 570.80,611.00 573.18,610.99 575.56,610.95 577.94,610.87 580.32,610.18 582.70,610.90 585.08,611.05 587.46,611.00 589.84,610.94 592.22,611.00 594.60,610.86 596.98,610.11 599.36,610.81 601.74,611.06 604.12,611.01 606.50,611.02 608.88,611.02 611.26,610.84 613.64,610.25 616.03,610.82 618.41,610.92 620.79,611.07 623.17,610.96 625.55,610.97 627.93,610.81 630.31,610.25 632.69,610.92 635.07,610.92 637.45,611.07 639.83,610.97 642.21,611.06 644.59,610.80 646.97,609.98 649.35,610.89 651.73,610.95 654.11,611.10 656.49,610.99 658.87,611.01 661.25,610.89 663.63,610.18 666.01,610.92 668.39,610.91 670.77,611.06 673.15,610.92 675.53,611.09 677.91,610.81 680.29,610.05 682.67,610.87 685.05,610.92 687.43,610.93 689.81,611.05 692.19,611.07 694.58,610.85 696.96,610.39 699.34,610.82 701.72,611.06 704.10,610.92 706.48,611.05 708.86,611.10 711.24,610.90 713.62,610.25 716.00,610.81 718.38,611.01 720.76,611.03 723.14,610.99 725.52,610.91 727.90,610.91 730.28,610.25 732.66,610.80 735.04,611.05 737.42,611.07 739.80,610.91 742.18,610.97 744.56,610.90 746.94,610.32 749.32,610.88 751.70,611.10 754.08,611.05 756.46,611.10 758.84,610.95 761.22,610.91 763.60,609.98 765.98,610.82 768.36,611.01 770.74,611.00 773.12,610.93 775.51,611.02 777.89,610.84 780.27,610.11 782.65,610.81 785.03,610.95 787.41,611.07 789.79,610.90 792.17,610.90 794.55,610.93 796.93,610.11 799.31,610.92 801.69,610.97 804.07,611.02 806.45,611.00 808.83,610.90 811.21,610.84 813.59,610.25 815.97,610.87 818.35,611.05 820.73,610.91 823.11,610.90 825.49,610.99 827.87,610.80 830.25,610.11 832.63,610.89 835.01,611.09 837.39,611.05 839.77,610.97 842.15,611.05 844.53,610.92 846.91,610.25 849.29,610.93 851.67,611.10 854.06,611.04 856.44,611.05 858.82,610.98 861.20,610.83 863.58,610.32 865.96,610.85 868.34,610.95 870.72,610.95 873.10,611.00 875.48,611.04 877.86,610.91 880.24,610.32 882.62,610.85 885.00,610.95 887.38,610.94 889.76,611.07 892.14,611.00 894.52,610.82 896.90,609.98 899.28,610.82 901.66,610.96 904.04,610.91 906.42,610.97 908.80,611.08 911.18,610.84 913.56,609.98 915.94,610.86 918.32,610.97 920.70,610.97 923.08,610.96 925.46,611.00 927.84,610.82 930.22,610.18 932.61,610.92 934.99,610.99 937.37,610.95 939.75,611.01 942.13,610.94 944.51,610.90 946.89,610.25 949.27,610.80 951.65,611.00 954.03,611.02 956.41,611.00 958.79,610.96 961.17,610.85 963.55,610.39 965.93,610.89 968.31,610.97 970.69,610.96 973.07,610.98 975.45,611.08 977.83,610.87 980.21,610.39 982.59,610.84 984.97,611.04 987.35,611.00 989.73,611.01 992.11,611.01 994.49,610.81 996.87,610.39 999.25,610.93 1001.63,611.01 1004.01,610.93 1006.39,610.90 1008.77,611.01 1011.15,610.90 1013.54,610.25 1015.92,610.92 1018.30,610.95 1020.68,611.05 1023.06,611.03 1025.44,610.98 1027.82,610.89 1030.20,610.11 1032.58,610.81 1034.96,611.00 1037.34,611.10 1039.72,611.10 1042.10,611.00 1044.48,610.89 1046.86,610.11 1049.24,610.92 1051.62,611.03 1054.00,611.04 1056.38,611.03 1058.76,611.02 1061.14,610.91 1063.52,610.32 1065.90,610.88 1068.28,611.02 1070.66,610.90 1073.04,610.98 1075.42,611.03 1077.80,610.89 1080.18,610.39 1082.56,610.84 1084.94,610.97 1087.32,611.07 1089.70,610.90 1092.09,611.01 1094.47,610.83 1096.85,609.98 1099.23,610.82 1101.61,610.97 1103.99,610.92 1106.37,610.91 1108.75,610.99 1111.13,610.93 1113.51,609.98 1115.89,610.91 1118.27,610.92 1120.65,611.00 1123.03,610.92 1125.41,610.99 1127.79,610.88 1130.17,610.11 1132.55,610.80 1134.93,611.05 1137.31,610.97 1139.69,611.04 1142.07,610.99 1144.45,610.91 1146.83,610.25 1149.21,610.82 1151.59,610.99 1153.97,611.01 1156.35,611.03 1158.73,610.95 1161.11,610.86 1163.49,610.25 1165.87,610.92 1168.25,611.05 1170.63,611.05 1173.02,610.99 1175.40,610.92 1177.78,610.88 1180.16,610.18 1182.54,610.89 1184.92,610.95 1187.30,611.00 1189.68,610.98 1192.06,611.03 1194.44,610.86 1196.82,610.05 1199.20,610.89 1201.58,611.05 1203.96,611.02 1206.34,611.01 1208.72,610.91 1211.10,610.81 1213.48,610.39 1215.86,610.83 1218.24,610.94 1220.62,610.90 1223.00,611.00 1225.38,611.09 1227.76,610.81 1230.14,609.98 1232.52,610.90 1234.90,611.08 1237.28,611.07 1239.66,611.00 1242.04,610.96 1244.42,610.83 1246.80,610.05 1249.18,610.92 1251.57,610.94 1253.95,611.10 1256.33,611.08 1258.71,610.99 1261.09,610.83 1263.47,610.32 1265.85,610.84 1268.23,610.96 1270.61,611.08 1272.99,611.09 1275.37,610.99 1277.75,610.88 1280.13,610.18 1282.51,610.86 1284.89,610.90 1287.27,611.05 1289.65,611.04 1292.03,610.93 1294.41,610.86 1296.79,610.39 1299.17,610.84 1301.55,611.04 1303.93,611.10 1306.31,611.00 1308.69,610.96 1311.07,610.90 1313.45,610.11 1315.83,610.93 1318.21,611.03 1320.59,611.02 1322.97,610.96 1325.35,611.06 1327.73,610.83 1330.12,610.25 1332.50,610.90 1334.88,610.95 1337.26,611.06 1339.64,611.01 1342.02,611.05 1344.40,610.92 1346.78,610.18 1349.16,610.90 1351.54,611.02 1353.92,610.97 1356.30,610.91 1358.68,611.07 1361.06,610.90 1363.44,610.25 1365.82,610.83 1368.20,611.06 1370.58,611.01 1372.96,610.96 1375.34,611.04 1377.72,610.92 1380.10,610.25 1382.48,610.80 1384.86,610.95 1387.24,611.10 1389.62,610.97 1392.00,611.02 1394.38,610.89 1396.76,610.39 1399.14,610.92 1401.52,611.02 1403.90,610.92 1406.28,610.99 1408.66,610.95 1411.05,610.83 1413.43,610.05 1415.81,610.93 1418.19,611.01 1420.57,611.03 1422.95,610.91 1425.33,611.06 1427.71,610.81 1430.09,609.98 1432.47,610.85 1434.85,611.02 1437.23,611.03 1439.61,611.01 1441.99,610.94 1444.37,610.91 1446.75,610.18 1449.13,610.89 1451.51,610.91 1453.89,610.98 1456.27,611.05 1458.65,610.96 1461.03,610.89 1463.41,610.05 1465.79,610.82 1468.17,610.64 1470.55,611.08 1472.93,611.01 1475.31,610.94 1477.69,610.94 1480.07,610.61 1482.45,611.04 1484.83,611.07 1487.21,610.93 1489.60,610.94 1491.98,611.00 1494.36,611.07 1496.74,610.97 1499.12,610.99 1501.50,611.02 1503.88,611.09 1506.26,611.06 1508.64,610.90 1511.02,611.07 1513.40,611.01 1515.78,611.05 1518.16,610.94 1520.54,610.94 1522.92,611.05 1525.30,611.05 1527.68,611.01 1530.06,611.05 1532.44,610.92 1534.82,611.09 1537.20,611.05 1539.58,610.97 1541.96,610.86 1544.34,610.92 1546.72,611.01 1549.10,610.92 1551.48,611.09 1553.86,610.93 1556.24,611.09 1558.62,611.07 1561.00,610.94 1563.38,611.10 1565.76,610.96 1568.15,611.09 1570.53,611.09 1572.91,611.09 1575.29,610.92 1577.67,610.93 1580.05,611.03 1582.43,610.73 1584.81,611.00 1587.19,610.94 1589.57,611.07 1591.95,610.97 1594.33,611.05 1596.71,610.97 1599.09,611.09 1601.47,610.92 1603.85,611.10 1606.23,610.94 1608.61,611.02 1610.99,610.91 1613.37,611.07 1615.75,611.08 1618.13,611.03 1620.51,610.82 1622.89,610.94 1625.27,610.99 1627.65,610.95 1630.03,611.03 1632.41,610.76 1634.79,610.95 1637.17,610.94 1639.55,610.61 1641.93,611.04 1644.31,610.97 1646.70,610.96 1649.08,610.92 1651.46,610.93 1653.84,610.98 1656.22,611.01 1658.60,611.09 1660.98,611.07 1663.36,611.07 1665.74,610.94 1668.12,610.92 1670.50,610.96 1672.88,611.04 1675.26,611.01 1677.64,610.94 1680.02,611.04 1682.40,611.02 1684.78,611.00 1687.16,611.10 1689.54,611.01 1691.92,610.98 1694.30,610.93 1696.68,610.77 1699.06,611.03 1701.44,611.00 1703.82,611.09 1706.20,610.91 1708.58,610.66 1710.96,610.92 1713.34,610.85 1715.72,610.98 1718.10,611.08 1720.48,610.92 1722.86,610.94 1725.24,610.96 1727.63,611.06 1730.01,610.98 1732.39,611.04 1734.77,610.92 1737.15,611.05 1739.53,611.00 1741.91,610.98 1744.29,611.03 1746.67,611.02 1749.05,611.05 1751.43,611.03 1753.81,611.05 1756.19,611.09 1758.57,610.90 1760.95,611.00 1763.33,611.68 1765.71,610.99 1768.09,610.95 1770.47,611.03 1772.85,611.07 1775.23,611.09 1777.61,610.98 1779.99,611.04 1782.37,611.04 1784.75,610.92 1787.13,610.92 1789.51,610.95 1791.89,611.04 1794.27,611.02 1796.65,580.00 1799.03,610.85 1801.41,610.99 1803.79,611.00 1806.18,611.02 1808.56,611.07 1810.94,610.93 1813.32,611.10 1815.70,610.96 1818.08,611.09 1820.46,610.97 1822.84,610.94 1825.22,611.09 1827.60,610.92 1829.98,610.98 1832.36,611.00 1834.74,610.85 1837.12,613.18 1839.50,611.07 1841.88,611.08 1844.26,610.97 1846.64,611.02 1849.02,610.97 1851.40,611.02 1853.78,606.36 1856.16,610.90 1858.54,611.00 1860.92,611.03 1863.30,610.92 1865.68,610.97 1868.06,610.90 1870.44,610.97 1872.82,610.92 1875.20,610.91 1877.58,611.09 1879.96,610.45 1882.34,610.91 1884.73,611.04 1887.11,610.92 1889.49,611.00 1891.87,610.92 1894.25,611.06 1896.63,610.25 1899.01,611.02 1901.39,611.02 1903.77,610.91' fill='none' stroke='#4477aa' stroke-width='1.2' stroke-linejoin='round'/>
<defs><filter id='sh' x='-30%' y='-30%' width='160%' height='180%'><feDropShadow dx='0' dy='1.5' stdDeviation='2' flood-color='#000' flood-opacity='0.16'/></filter></defs>
<rect x='1824' y='331' width='75' height='42.5' rx='4' fill='#fff' filter='url(#sh)'/>
<g fill='none' stroke='#555' stroke-width='1.4'><path d='M1848.4,348.8 L1855.4,342.2 M1849.6,342.3 H1855.6 V348 M1843,354.3 L1836.2,361.3 M1836.2,355.3 V361.3 H1842'/></g>
<rect x='1869.3' y='349.8' width='3.9' height='3.9' rx='1.2' fill='#555'/>
<rect x='1876.2' y='349.8' width='3.9' height='3.9' rx='1.2' fill='#555'/>
<rect x='1883.1' y='349.8' width='3.9' height='3.9' rx='1.2' fill='#555'/>
<rect x='70.5' y='961.25' width='881.3' height='1' fill='#efefef'/>
<rect x='70.5' y='877.35' width='881.3' height='1' fill='#efefef'/>
<rect x='70.5' y='793.45' width='881.3' height='1' fill='#efefef'/>
<rect x='70.5' y='709.55' width='881.3' height='1' fill='#efefef'/>
<rect x='70.5' y='625.65' width='881.3' height='1' fill='#efefef'/>
<rect x='80' y='625.5' width='1' height='336.5' fill='#efefef'/>
<rect x='81' y='961.6' width='870.8' height='1.2' fill='#9e9e9e'/>
<text x='34.72' y='968.20' font-family='Liberation Mono' font-weight='400' font-size='16' fill='#595959' textLength='29.89' lengthAdjust='spacingAndGlyphs' xml:space='preserve'>0,00</text>
<text x='34.72' y='883.35' font-family='Liberation Mono' font-weight='400' font-size='16' fill='#595959' textLength='29.89' lengthAdjust='spacingAndGlyphs' xml:space='preserve'>5,00</text>
<text x='25.90' y='799.45' font-family='Liberation Mono' font-weight='400' font-size='16' fill='#595959' textLength='38.41' lengthAdjust='spacingAndGlyphs' xml:space='preserve'>10,00</text>
<text x='25.90' y='715.55' font-family='Liberation Mono' font-weight='400' font-size='16' fill='#595959' textLength='38.41' lengthAdjust='spacingAndGlyphs' xml:space='preserve'>15,00</text>
<text x='25.90' y='639.20' font-family='Liberation Mono' font-weight='400' font-size='16' fill='#595959' textLength='38.41' lengthAdjust='spacingAndGlyphs' xml:space='preserve'>20,00</text>
<rect x='95.00' y='696.79' width='64' height='265.56' fill='#4476a9'/>
<text x='105.04' y='687.29' font-family='Liberation Mono' font-weight='400' font-size='18' fill='#404040' textLength='43.94' lengthAdjust='spacingAndGlyphs' xml:space='preserve'>15,79</text>
<text x='97.97' y='988.30' font-family='Liberation Mono' font-weight='400' font-size='16.5' fill='#404040' textLength='57.49' lengthAdjust='spacingAndGlyphs' xml:space='preserve'>2020-К1</text>
<rect x='186.78' y='729.68' width='64' height='232.67' fill='#4476a9'/>
<text x='196.82' y='720.18' font-family='Liberation Mono' font-weight='400' font-size='18' fill='#404040' textLength='43.94' lengthAdjust='spacingAndGlyphs' xml:space='preserve'>13,83</text>
<text x='189.75' y='988.30' font-family='Liberation Mono' font-weight='400' font-size='16.5' fill='#404040' textLength='57.49' lengthAdjust='spacingAndGlyphs' xml:space='preserve'>2020-К2</text>
<rect x='278.56' y='740.25' width='64' height='222.10' fill='#4476a9'/>
<text x='288.60' y='730.75' font-family='Liberation Mono' font-weight='400' font-size='18' fill='#404040' textLength='43.94' lengthAdjust='spacingAndGlyphs' xml:space='preserve'>13,20</text>
<text x='281.53' y='988.30' font-family='Liberation Mono' font-weight='400' font-size='16.5' fill='#404040' textLength='57.49' lengthAdjust='spacingAndGlyphs' xml:space='preserve'>2020-К3</text>
<rect x='370.34' y='720.29' width='64' height='242.06' fill='#4476a9'/>
<text x='380.38' y='710.79' font-family='Liberation Mono' font-weight='400' font-size='18' fill='#404040' textLength='43.94' lengthAdjust='spacingAndGlyphs' xml:space='preserve'>14,39</text>
<text x='373.31' y='988.30' font-family='Liberation Mono' font-weight='400' font-size='16.5' fill='#404040' textLength='57.49' lengthAdjust='spacingAndGlyphs' xml:space='preserve'>2020-К4</text>
<rect x='462.12' y='681.36' width='64' height='280.99' fill='#4476a9'/>
<text x='472.17' y='671.86' font-family='Liberation Mono' font-weight='400' font-size='18' fill='#404040' textLength='43.11' lengthAdjust='spacingAndGlyphs' xml:space='preserve'>16,71</text>
<text x='465.09' y='988.30' font-family='Liberation Mono' font-weight='400' font-size='16.5' fill='#404040' textLength='57.49' lengthAdjust='spacingAndGlyphs' xml:space='preserve'>2021-К1</text>
<rect x='553.90' y='704.18' width='64' height='258.17' fill='#4476a9'/>
<text x='563.94' y='694.68' font-family='Liberation Mono' font-weight='400' font-size='18' fill='#404040' textLength='43.94' lengthAdjust='spacingAndGlyphs' xml:space='preserve'>15,35</text>
<text x='556.87' y='988.30' font-family='Liberation Mono' font-weight='400' font-size='16.5' fill='#404040' textLength='57.49' lengthAdjust='spacingAndGlyphs' xml:space='preserve'>2021-К2</text>
<rect x='645.68' y='689.75' width='64' height='272.60' fill='#4476a9'/>
<text x='655.73' y='680.25' font-family='Liberation Mono' font-weight='400' font-size='18' fill='#404040' textLength='43.11' lengthAdjust='spacingAndGlyphs' xml:space='preserve'>16,21</text>
<text x='648.65' y='988.30' font-family='Liberation Mono' font-weight='400' font-size='16.5' fill='#404040' textLength='57.49' lengthAdjust='spacingAndGlyphs' xml:space='preserve'>2021-К3</text>
<rect x='737.46' y='767.10' width='64' height='195.25' fill='#4476a9'/>
<text x='747.50' y='757.60' font-family='Liberation Mono' font-weight='400' font-size='18' fill='#404040' textLength='43.94' lengthAdjust='spacingAndGlyphs' xml:space='preserve'>11,60</text>
<text x='740.43' y='988.30' font-family='Liberation Mono' font-weight='400' font-size='16.5' fill='#404040' textLength='57.49' lengthAdjust='spacingAndGlyphs' xml:space='preserve'>2021-К4</text>
<rect x='829.24' y='722.80' width='64' height='239.55' fill='#4476a9'/>
<text x='839.29' y='713.30' font-family='Liberation Mono' font-weight='400' font-size='18' fill='#404040' textLength='43.11' lengthAdjust='spacingAndGlyphs' xml:space='preserve'>14,24</text>
<text x='832.21' y='988.30' font-family='Liberation Mono' font-weight='400' font-size='16.5' fill='#404040' textLength='57.49' lengthAdjust='spacingAndGlyphs' xml:space='preserve'>2022-К1</text>
<rect x='1024.4' y='961.50' width='731.4' height='1' fill='#efefef'/>
<rect x='1024.4' y='906.70' width='731.4' height='1' fill='#efefef'/>
<rect x='1024.4' y='851.50' width='731.4' height='1' fill='#efefef'/>
<rect x='1024.4' y='795.50' width='731.4' height='1' fill='#efefef'/>
<rect x='1024.4' y='739.80' width='731.4' height='1' fill='#efefef'/>
<rect x='1024.4' y='684.00' width='731.4' height='1' fill='#efefef'/>
<rect x='1024.4' y='627.50' width='731.4' height='1' fill='#efefef'/>
<rect x='1034' y='628' width='1' height='334' fill='#efefef'/>
<polygon points='1074.10,961.90 1074.10,680.40 1154.38,684.30 1234.66,698.80 1314.94,718.00 1395.22,685.60 1475.50,687.20 1555.78,660.50 1636.06,754.70 1716.34,703.00 1716.34,961.90' fill='#c1d5e3'/>
<polygon points='1074.10,961.90 1074.10,934.40 1154.38,938.20 1234.66,940.00 1314.94,943.70 1395.22,943.00 1475.50,937.40 1555.78,932.60 1636.06,918.60 1716.34,900.60 1716.34,961.90' fill='#c1cedb'/>
<rect x='1074.10' y='906.70' width='642.2' height='1' fill='#000' fill-opacity='0.025'/>
<rect x='1074.10' y='851.50' width='642.2' height='1' fill='#000' fill-opacity='0.025'/>
<rect x='1074.10' y='795.50' width='642.2' height='1' fill='#000' fill-opacity='0.025'/>
<rect x='1074.10' y='739.80' width='642.2' height='1' fill='#000' fill-opacity='0.025'/>
<rect x='1074.10' y='684.00' width='642.2' height='1' fill='#000' fill-opacity='0.025'/>
<rect x='1074.10' y='627.50' width='642.2' height='1' fill='#000' fill-opacity='0.025'/>
<rect x='1034.6' y='961.5' width='721.2' height='1.3' fill='#9e9e9e'/>
<polyline points='1074.10,934.40 1154.38,938.20 1234.66,940.00 1314.94,943.70 1395.22,943.00 1475.50,937.40 1555.78,932.60 1636.06,918.60 1716.34,900.60' fill='none' stroke='#2b5f8e' stroke-width='1.4'/>
<polyline points='1074.10,680.40 1154.38,684.30 1234.66,698.80 1314.94,718.00 1395.22,685.60 1475.50,687.20 1555.78,660.50 1636.06,754.70 1716.34,703.00' fill='none' stroke='#2e78aa' stroke-width='1.4'/>
<circle cx='1074.10' cy='934.40' r='3.6' fill='#2b5f8e' stroke='#fff' stroke-opacity='0.5' stroke-width='0.6'/>
<circle cx='1074.10' cy='680.40' r='3.6' fill='#2e78aa' stroke='#fff' stroke-opacity='0.5' stroke-width='0.6'/>
<text x='1044.76' y='988.00' font-family='Liberation Mono' font-weight='400' font-size='16.5' fill='#404040' textLength='58.10' lengthAdjust='spacingAndGlyphs' xml:space='preserve'>2020-К1</text>
<circle cx='1154.38' cy='938.20' r='3.6' fill='#2b5f8e' stroke='#fff' stroke-opacity='0.5' stroke-width='0.6'/>
<circle cx='1154.38' cy='684.30' r='3.6' fill='#2e78aa' stroke='#fff' stroke-opacity='0.5' stroke-width='0.6'/>
<text x='1125.04' y='988.00' font-family='Liberation Mono' font-weight='400' font-size='16.5' fill='#404040' textLength='58.10' lengthAdjust='spacingAndGlyphs' xml:space='preserve'>2020-К2</text>
<circle cx='1234.66' cy='940.00' r='3.6' fill='#2b5f8e' stroke='#fff' stroke-opacity='0.5' stroke-width='0.6'/>
<circle cx='1234.66' cy='698.80' r='3.6' fill='#2e78aa' stroke='#fff' stroke-opacity='0.5' stroke-width='0.6'/>
<text x='1205.32' y='988.00' font-family='Liberation Mono' font-weight='400' font-size='16.5' fill='#404040' textLength='58.10' lengthAdjust='spacingAndGlyphs' xml:space='preserve'>2020-К3</text>
<circle cx='1314.94' cy='943.70' r='3.6' fill='#2b5f8e' stroke='#fff' stroke-opacity='0.5' stroke-width='0.6'/>
<circle cx='1314.94' cy='718.00' r='3.6' fill='#2e78aa' stroke='#fff' stroke-opacity='0.5' stroke-width='0.6'/>
<text x='1285.60' y='988.00' font-family='Liberation Mono' font-weight='400' font-size='16.5' fill='#404040' textLength='58.10' lengthAdjust='spacingAndGlyphs' xml:space='preserve'>2020-К4</text>
<circle cx='1395.22' cy='943.00' r='3.6' fill='#2b5f8e' stroke='#fff' stroke-opacity='0.5' stroke-width='0.6'/>
<circle cx='1395.22' cy='685.60' r='3.6' fill='#2e78aa' stroke='#fff' stroke-opacity='0.5' stroke-width='0.6'/>
<text x='1365.88' y='988.00' font-family='Liberation Mono' font-weight='400' font-size='16.5' fill='#404040' textLength='58.10' lengthAdjust='spacingAndGlyphs' xml:space='preserve'>2021-К1</text>
<circle cx='1475.50' cy='937.40' r='3.6' fill='#2b5f8e' stroke='#fff' stroke-opacity='0.5' stroke-width='0.6'/>
<circle cx='1475.50' cy='687.20' r='3.6' fill='#2e78aa' stroke='#fff' stroke-opacity='0.5' stroke-width='0.6'/>
<text x='1446.16' y='988.00' font-family='Liberation Mono' font-weight='400' font-size='16.5' fill='#404040' textLength='58.10' lengthAdjust='spacingAndGlyphs' xml:space='preserve'>2021-К2</text>
<circle cx='1555.78' cy='932.60' r='3.6' fill='#2b5f8e' stroke='#fff' stroke-opacity='0.5' stroke-width='0.6'/>
<circle cx='1555.78' cy='660.50' r='3.6' fill='#2e78aa' stroke='#fff' stroke-opacity='0.5' stroke-width='0.6'/>
<text x='1526.44' y='988.00' font-family='Liberation Mono' font-weight='400' font-size='16.5' fill='#404040' textLength='58.10' lengthAdjust='spacingAndGlyphs' xml:space='preserve'>2021-К3</text>
<circle cx='1636.06' cy='918.60' r='3.6' fill='#2b5f8e' stroke='#fff' stroke-opacity='0.5' stroke-width='0.6'/>
<circle cx='1636.06' cy='754.70' r='3.6' fill='#2e78aa' stroke='#fff' stroke-opacity='0.5' stroke-width='0.6'/>
<text x='1606.72' y='988.00' font-family='Liberation Mono' font-weight='400' font-size='16.5' fill='#404040' textLength='58.10' lengthAdjust='spacingAndGlyphs' xml:space='preserve'>2021-К4</text>
<circle cx='1716.34' cy='900.60' r='3.6' fill='#2b5f8e' stroke='#fff' stroke-opacity='0.5' stroke-width='0.6'/>
<circle cx='1716.34' cy='703.00' r='3.6' fill='#2e78aa' stroke='#fff' stroke-opacity='0.5' stroke-width='0.6'/>
<text x='1687.00' y='988.00' font-family='Liberation Mono' font-weight='400' font-size='16.5' fill='#404040' textLength='58.10' lengthAdjust='spacingAndGlyphs' xml:space='preserve'>2022-К1</text>
<text x='988.82' y='968.10' font-family='Liberation Mono' font-weight='400' font-size='16' fill='#595959' textLength='29.89' lengthAdjust='spacingAndGlyphs' xml:space='preserve'>0,00</text>
<text x='988.82' y='912.50' font-family='Liberation Mono' font-weight='400' font-size='16' fill='#595959' textLength='29.89' lengthAdjust='spacingAndGlyphs' xml:space='preserve'>5,00</text>
<text x='979.29' y='857.30' font-family='Liberation Mono' font-weight='400' font-size='16' fill='#595959' textLength='39.13' lengthAdjust='spacingAndGlyphs' xml:space='preserve'>10,00</text>
<text x='979.29' y='801.30' font-family='Liberation Mono' font-weight='400' font-size='16' fill='#595959' textLength='39.13' lengthAdjust='spacingAndGlyphs' xml:space='preserve'>15,00</text>
<text x='979.29' y='745.60' font-family='Liberation Mono' font-weight='400' font-size='16' fill='#595959' textLength='39.13' lengthAdjust='spacingAndGlyphs' xml:space='preserve'>20,00</text>
<text x='979.29' y='689.80' font-family='Liberation Mono' font-weight='400' font-size='16' fill='#595959' textLength='39.13' lengthAdjust='spacingAndGlyphs' xml:space='preserve'>25,00</text>
<text x='979.29' y='641.80' font-family='Liberation Mono' font-weight='400' font-size='16' fill='#595959' textLength='39.13' lengthAdjust='spacingAndGlyphs' xml:space='preserve'>30,00</text>
<text x='1767.60' y='654.10' font-family='Liberation Sans' font-weight='400' font-size='17' fill='#595959' textLength='129.55' lengthAdjust='spacingAndGlyphs' xml:space='preserve'>Тип контрагента</text>
<rect x='1767' y='680.6' width='15' height='3.4' fill='#2b5f8e'/><circle cx='1774.5' cy='682.3' r='3.8' fill='#2b5f8e'/>
<text x='1791.59' y='688.80' font-family='Liberation Sans' font-weight='400' font-size='17.5' fill='#4d4d4d' textLength='71.37' lengthAdjust='spacingAndGlyphs' xml:space='preserve'>Физлицо</text>
<rect x='1767' y='708.1' width='15' height='3.4' fill='#2e78aa'/><circle cx='1774.5' cy='709.8' r='3.8' fill='#2e78aa'/>
<text x='1791.60' y='716.30' font-family='Liberation Sans' font-weight='400' font-size='17.5' fill='#4d4d4d' xml:space='preserve'>Юрлицо</text>
<rect x='11.5' y='1003.5' width='938' height='34' rx='3.5' fill='#fff' stroke='#e0e0e0' stroke-width='1'/>
<rect x='199.1' y='1004' width='1' height='33' fill='#dedede'/>
<rect x='386.7' y='1004' width='1' height='33' fill='#dedede'/>
<rect x='574.3' y='1004' width='1' height='33' fill='#dedede'/>
<rect x='761.9' y='1004' width='1' height='33' fill='#dedede'/>
<rect x='199.10' y='1003' width='187.60' height='35' fill='#009845'/>
<text x='92.07' y='1025.00' font-family='Liberation Sans' font-weight='700' font-size='16' fill='#595959' textLength='25.93' lengthAdjust='spacingAndGlyphs' xml:space='preserve'>Год</text>
<text x='245.12' y='1025.00' font-family='Liberation Sans' font-weight='700' font-size='16' fill='#ffffff' textLength='95.63' lengthAdjust='spacingAndGlyphs' xml:space='preserve'>Год-Квартал</text>
<text x='440.14' y='1025.00' font-family='Liberation Sans' font-weight='700' font-size='16' fill='#595959' textLength='79.89' lengthAdjust='spacingAndGlyphs' xml:space='preserve'>Год-Месяц</text>
<text x='623.84' y='1025.00' font-family='Liberation Sans' font-weight='700' font-size='16' fill='#595959' textLength='88.27' lengthAdjust='spacingAndGlyphs' xml:space='preserve'>Год-Неделя</text>
<text x='838.00' y='1025.00' font-family='Liberation Sans' font-weight='700' font-size='16' fill='#595959' textLength='34.59' lengthAdjust='spacingAndGlyphs' xml:space='preserve'>Дата</text>
<rect x='965.5' y='1003.5' width='943' height='34' rx='3.5' fill='#fff' stroke='#e3e3e3' stroke-width='1'/>
<text x='978.50' y='1025.00' font-family='Liberation Sans' font-weight='700' font-size='16' fill='#595959' textLength='122.57' lengthAdjust='spacingAndGlyphs' xml:space='preserve'>Тип контрагента</text>
<path d='M1883.6,1016.1 h11.7 l-5.85,8 z' fill='#595959'/>
</svg></body></html>
